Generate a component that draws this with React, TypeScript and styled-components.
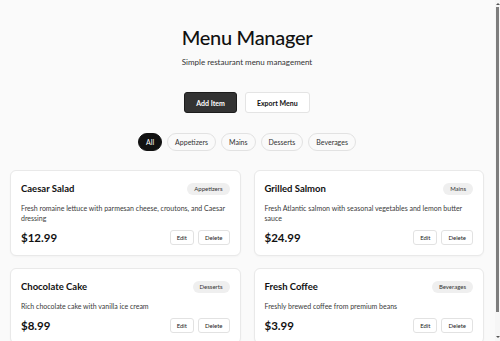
import { createGlobalStyle } from 'styled-components';
import styled from 'styled-components';
import { useState } from 'react';

const GlobalStyle = createGlobalStyle`
  body {
    margin: 0;
    background: #fafafa;
    font-family: 'Lato', 'Noto Sans', sans-serif;
    color: #111;
  }
  * {
    box-sizing: border-box;
  }
`;

type Category = 'Appetizers' | 'Mains' | 'Desserts' | 'Beverages';

interface MenuItem {
  id: number;
  name: string;
  description: string;
  price: number;
  category: Category;
}

const ITEMS: MenuItem[] = [
  {
    id: 1,
    name: 'Caesar Salad',
    description: 'Fresh romaine lettuce with parmesan cheese, croutons, and Caesar dressing',
    price: 12.99,
    category: 'Appetizers',
  },
  {
    id: 2,
    name: 'Grilled Salmon',
    description: 'Fresh Atlantic salmon with seasonal vegetables and lemon butter sauce',
    price: 24.99,
    category: 'Mains',
  },
  {
    id: 3,
    name: 'Chocolate Cake',
    description: 'Rich chocolate cake with vanilla ice cream',
    price: 8.99,
    category: 'Desserts',
  },
  {
    id: 4,
    name: 'Fresh Coffee',
    description: 'Freshly brewed coffee from premium beans',
    price: 3.99,
    category: 'Beverages',
  },
];

const FILTERS = ['All', 'Appetizers', 'Mains', 'Desserts', 'Beverages'];

// right padding leaves room for the thin page scrollbar
const Page = styled.div`
  padding: 24px 16px 40px 10px;
`;

const ScrollTrack = styled.div`
  position: fixed;
  top: 0;
  right: 0;
  bottom: 0;
  width: 5px;
  background: #f6f6f6;
  display: flex;
  flex-direction: column;
  align-items: center;
  padding: 3px 0;
`;

const ScrollArrow = styled.span<{ $down?: boolean }>`
  width: 0;
  height: 0;
  border-left: 2px solid transparent;
  border-right: 2px solid transparent;
  ${({ $down }) => ($down ? 'border-top: 2px solid #555;' : 'border-bottom: 2px solid #555;')}
`;

const ScrollThumb = styled.span`
  width: 3px;
  height: 305px;
  margin: 2px 0 auto;
  background: #7d7d7d;
`;

const Header = styled.header`
  display: flex;
  flex-direction: column;
  align-items: center;
`;

const Title = styled.h1`
  margin: 0;
  font-size: 20px;
  line-height: 26px;
  font-weight: 500;
  letter-spacing: -0.3px;
`;

const Subtitle = styled.p`
  margin: 6px 0 0;
  font-size: 8px;
  line-height: 12px;
  color: #333;
`;

const Actions = styled.div`
  display: flex;
  justify-content: center;
  gap: 8px;
  margin-top: 24px;
`;

const ActionButton = styled.button<{ $primary?: boolean }>`
  height: 21px;
  padding: 0 11px;
  border-radius: 3px;
  font-family: inherit;
  font-size: 7px;
  font-weight: 700;
  cursor: pointer;
  border: 1px solid ${({ $primary }) => ($primary ? '#1c1c1c' : '#e4e4e4')};
  background: ${({ $primary }) => ($primary ? '#333' : '#fff')};
  color: ${({ $primary }) => ($primary ? '#fff' : '#111')};
`;

const Filters = styled.div`
  display: flex;
  justify-content: center;
  gap: 5px;
  margin-top: 20px;
`;

const Chip = styled.button<{ $active?: boolean }>`
  height: 18px;
  padding: 0 7px;
  border-radius: 9px;
  font-family: inherit;
  font-size: 7px;
  cursor: pointer;
  border: 1px solid ${({ $active }) => ($active ? '#111' : '#e2e2e2')};
  background: ${({ $active }) => ($active ? '#111' : '#fafafa')};
  color: ${({ $active }) => ($active ? '#fff' : '#333')};
`;

const Grid = styled.div`
  display: grid;
  grid-template-columns: 1fr 1fr;
  gap: 12px 13px;
  margin-top: 19px;
`;

const Card = styled.article`
  background: #fff;
  border: 1px solid #e9e9e9;
  border-radius: 6px;
  padding: 11px 10px 10px;
  box-shadow: 0 1px 2px rgba(0, 0, 0, 0.03);
`;

const CardHead = styled.div`
  display: flex;
  justify-content: space-between;
  align-items: center;
`;

const ItemName = styled.h3`
  margin: 0;
  font-size: 9.5px;
  font-weight: 700;
  line-height: 14px;
`;

const Badge = styled.span`
  background: #efefef;
  border-radius: 6px;
  padding: 0 7px;
  height: 12px;
  line-height: 12px;
  font-size: 6px;
  color: #333;
`;

const Description = styled.p`
  margin: 7px 0 0;
  font-size: 7px;
  line-height: 10px;
  color: #3a3a3a;
`;

const CardFoot = styled.div`
  display: flex;
  justify-content: space-between;
  align-items: center;
  margin-top: 7px;
`;

const Price = styled.span`
  font-size: 11.5px;
  font-weight: 700;
`;

const SmallActions = styled.div`
  display: flex;
  gap: 4px;
`;

const SmallButton = styled.button`
  height: 15px;
  padding: 0 6px;
  background: #fff;
  border: 1px solid #e2e2e2;
  border-radius: 3px;
  font-family: inherit;
  font-size: 6px;
  color: #222;
  cursor: pointer;
`;

export default function App() {
  const [filter, setFilter] = useState('All');
  const shown = ITEMS.filter((i) => filter === 'All' || i.category === filter);

  return (
    <Page>
      <GlobalStyle />
      <Header>
        <Title>Menu Manager</Title>
        <Subtitle>Simple restaurant menu management</Subtitle>
      </Header>
      <Actions>
        <ActionButton $primary>Add Item</ActionButton>
        <ActionButton>Export Menu</ActionButton>
      </Actions>
      <Filters>
        {FILTERS.map((f) => (
          <Chip key={f} $active={f === filter} onClick={() => setFilter(f)}>
            {f}
          </Chip>
        ))}
      </Filters>
      <Grid>
        {shown.map((item) => (
          <Card key={item.id}>
            <CardHead>
              <ItemName>{item.name}</ItemName>
              <Badge>{item.category}</Badge>
            </CardHead>
            <Description>{item.description}</Description>
            <CardFoot>
              <Price>${item.price.toFixed(2)}</Price>
              <SmallActions>
                <SmallButton>Edit</SmallButton>
                <SmallButton>Delete</SmallButton>
              </SmallActions>
            </CardFoot>
          </Card>
        ))}
      </Grid>
      <ScrollTrack>
        <ScrollArrow />
        <ScrollThumb />
        <ScrollArrow $down />
      </ScrollTrack>
    </Page>
  );
}
